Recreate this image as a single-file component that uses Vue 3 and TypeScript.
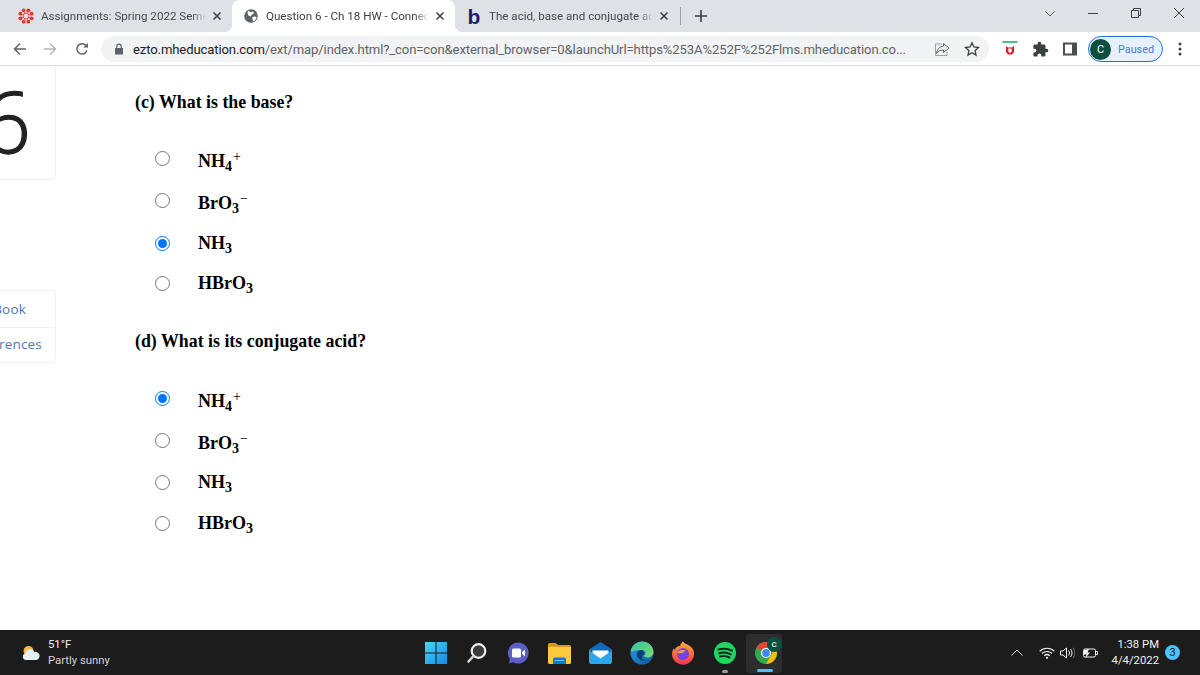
<script setup lang="ts">
interface Choice { base: string; sub: string; sup?: string; cls: string; checked?: boolean }
interface Question { title: string; name: string; cls: string; choices: Choice[] }

const questions: Question[] = [
  {
    title: '(c) What is the base?', name: 'c', cls: 'q-c',
    choices: [
      { base: 'NH', sub: '4', sup: '+', cls: 'h41' },
      { base: 'BrO', sub: '3', sup: '−', cls: 'h42' },
      { base: 'NH', sub: '3', cls: 'h44', checked: true },
      { base: 'HBrO', sub: '3', cls: 'h36' },
    ],
  },
  {
    title: '(d) What is its conjugate acid?', name: 'd', cls: 'q-d',
    choices: [
      { base: 'NH', sub: '4', sup: '+', cls: 'h42', checked: true },
      { base: 'BrO', sub: '3', sup: '−', cls: 'h42' },
      { base: 'NH', sub: '3', cls: 'h42' },
      { base: 'HBrO', sub: '3', cls: 'h40' },
    ],
  },
]

const canvasDots = Array.from({ length: 8 }, (_, i) => {
  const a = (i * Math.PI) / 4 + Math.PI / 8
  return { cx: 8 + Math.cos(a) * 6.1, cy: 8 + Math.sin(a) * 6.1 }
})
const canvasInner = Array.from({ length: 8 }, (_, i) => {
  const a = (i * Math.PI) / 4 + Math.PI / 8
  return { cx: 8 + Math.cos(a) * 3.1, cy: 8 + Math.sin(a) * 3.1 }
})
</script>

<template>
  <div class="app">
    <header class="tabstrip">
      <div class="tab tab-first">
        <svg class="fav" viewBox="0 0 16 16" width="16" height="16">
          <circle v-for="(d, i) in canvasDots" :key="i" :cx="d.cx" :cy="d.cy" r="1.9" fill="#e5352b" />
          <circle v-for="(d, i) in canvasInner" :key="'n' + i" :cx="d.cx" :cy="d.cy" r="0.9" fill="#e5352b" />
        </svg>
        <span class="tab-title">Assignments: Spring 2022 Semes</span>
        <svg class="tab-x" viewBox="0 0 10 10" width="10" height="10"><path d="M1.500 1.500l7 7M8.500 1.500l-7 7" stroke="#3c4043" stroke-width="1.500" fill="none" /></svg>
      </div>
      <div class="tab tab-active">
        <svg class="fav" viewBox="0 0 16 16" width="16" height="16">
          <circle cx="8" cy="8" r="6.800" fill="#5f6368" />
          <path d="M5 2.600l2.400 1.600 2.600-.6 1 1.600-2 1.200-1.400 2-2.200-1-.9-2.300zM9.500 9l2.800-.6 1.500 1.300-1.900 2.800-1.500 1-1-2.400z" fill="#fff" />
        </svg>
        <span class="tab-title">Question 6 - Ch 18 HW - Connec</span>
        <svg class="tab-x" viewBox="0 0 10 10" width="10" height="10"><path d="M1.500 1.500l7 7M8.500 1.500l-7 7" stroke="#3c4043" stroke-width="1.500" fill="none" /></svg>
      </div>
      <div class="tab tab-third">
        <span class="fav-b">b</span>
        <span class="tab-title">The acid, base and conjugate aci</span>
        <svg class="tab-x" viewBox="0 0 10 10" width="10" height="10"><path d="M1.500 1.500l7 7M8.500 1.500l-7 7" stroke="#3c4043" stroke-width="1.500" fill="none" /></svg>
      </div>
      <span class="tab-sep"></span>
      <svg class="new-tab" viewBox="0 0 12 12" width="12" height="12"><path d="M6 0v12M0 6h12" stroke="#3c4043" stroke-width="1.600" /></svg>
      <span class="strip-space"></span>
      <svg class="win-chevron" viewBox="0 0 10 6" width="10" height="6"><path d="M.5.5l4.500 4.500L9.500.5" stroke="#5f6368" fill="none" /></svg>
      <div class="win-btn"><svg viewBox="0 0 10 10" width="10" height="10"><path d="M0 5.500h10" stroke="#3c4043" /></svg></div>
      <div class="win-btn"><svg viewBox="0 0 10 10" width="10" height="10"><path d="M.5 2.500h7v7h-7zM2.500 2.500v-2h7v7h-2" stroke="#3c4043" fill="none" /></svg></div>
      <div class="win-btn"><svg viewBox="0 0 10 10" width="10" height="10"><path d="M0 0l10 10M10 0L0 10" stroke="#3c4043" fill="none" /></svg></div>
    </header>

    <nav class="toolbar">
      <svg class="nav-ic" viewBox="0 0 14 14" width="14" height="14"><path d="M13 7H1.500M7 1.500L1.500 7 7 12.500" stroke="#5f6368" stroke-width="1.500" fill="none" /></svg>
      <svg class="nav-ic" viewBox="0 0 14 14" width="14" height="14"><path d="M1 7h11.500M7 1.500L12.500 7 7 12.500" stroke="#b4b7bb" stroke-width="1.500" fill="none" /></svg>
      <svg class="nav-ic" viewBox="0 0 14 14" width="14" height="14"><path d="M12 8.600A5.200 5.200 0 1 1 11 3.400L12.600 5" stroke="#5f6368" stroke-width="1.500" fill="none" /><path d="M13 1v4.600H8.400z" fill="#5f6368" /></svg>
      <div class="omnibox">
        <svg class="lock" viewBox="0 0 10 12" width="10" height="12"><path d="M1 5h8v6.500H1z" fill="#5f6368" /><path d="M2.800 5V3.400a2.200 2.200 0 0 1 4.400 0V5" fill="none" stroke="#5f6368" stroke-width="1.200" /></svg>
        <span class="url"><b>ezto.mheducation.com</b>/ext/map/index.html?_con=con&amp;external_browser=0&amp;launchUrl=https%253A%252F%252Flms.mheducation.co...</span>
        <svg class="omni-ic" viewBox="0 0 16 16" width="16" height="16"><path d="M9.500 2.500L15 7l-5.500 4.500V9C6 9 4 10 2.500 12.500 3 8.500 5.500 5.500 9.500 5z" fill="none" stroke="#5f6368" /><path d="M8 3H1.500v11.500H13V11" fill="none" stroke="#9aa0a6" /></svg>
        <svg class="omni-ic star" viewBox="0 0 16 16" width="16" height="16"><path d="M8 1.800l1.900 4.200 4.600.5-3.400 3.100.9 4.500L8 11.800 4 14.100l.9-4.500L1.500 6.500 6.100 6z" fill="none" stroke="#3c4043" stroke-width="1.300" /></svg>
      </div>
      <svg class="ext mcafee" viewBox="0 0 16 16" width="16" height="16"><path d="M.5 1h15" stroke="#1e9e7d" stroke-width="1.500" /><path d="M4 5l2 1.500h4L12 5v6l-2 2.500H6L4 11z" fill="#d32027" /><path d="M6.300 7.500h3.400v3.200L8 12l-1.700-1.300z" fill="#fff" /></svg>
      <svg class="ext puzzle" viewBox="0 0 24 24" width="17" height="17"><path d="M20.500 11H19V7c0-1.100-.9-2-2-2h-4V3.500C13 2.120 11.880 1 10.500 1S8 2.120 8 3.500V5H4c-1.100 0-1.990.9-1.990 2v3.800H3.500c1.490 0 2.700 1.210 2.700 2.700s-1.210 2.700-2.700 2.700H2V20c0 1.100.9 2 2 2h3.800v-1.500c0-1.490 1.210-2.700 2.700-2.700 1.490 0 2.700 1.210 2.700 2.700V22H17c1.100 0 2-.9 2-2v-4h1.500c1.380 0 2.500-1.120 2.500-2.500S21.880 11 20.500 11z" fill="#3c4043" /></svg>
      <svg class="ext panel" viewBox="0 0 14 14" width="14" height="14"><rect x="1" y="1.500" width="12" height="11" fill="none" stroke="#4a4d51" stroke-width="2" /><rect x="9" y="2" width="4" height="10" fill="#4a4d51" /></svg>
      <div class="profile"><span class="avatar">C</span><span class="paused">Paused</span></div>
      <svg class="kebab" viewBox="0 0 4 14" width="4" height="14"><circle cx="2" cy="2" r="1.500" fill="#3c4043" /><circle cx="2" cy="7" r="1.500" fill="#3c4043" /><circle cx="2" cy="12" r="1.500" fill="#3c4043" /></svg>
    </nav>

    <div class="page">
      <aside class="sidebar">
        <div class="num-card"><span class="big-six">6</span></div>
        <div class="link-card">
          <div class="link-row book">eBook</div>
          <div class="link-row refs">References</div>
        </div>
      </aside>
      <main class="main">
        <section v-for="q in questions" :key="q.name" class="question" :class="q.cls">
          <h2 class="q-title">{{ q.title }}</h2>
          <ul class="choices">
            <li v-for="(c, i) in q.choices" :key="i" class="choice" :class="c.cls">
              <input class="radio" type="radio" :name="q.name" :checked="c.checked" />
              <span class="formula" :class="{ ion: c.sup }">{{ c.base }}<sub>{{ c.sub }}</sub><sup v-if="c.sup">{{ c.sup }}</sup></span>
            </li>
          </ul>
        </section>
      </main>
    </div>

    <footer class="taskbar">
      <div class="weather">
        <svg viewBox="0 0 20 16" width="20" height="16">
          <circle cx="7.500" cy="6" r="5" fill="#f5b83d" />
          <path d="M5 15a3.300 3.300 0 0 1-.6-6.500A4.800 4.800 0 0 1 13.500 7 3.900 3.900 0 0 1 15.500 15z" fill="#e4eff7" />
        </svg>
        <div class="weather-text"><span>51°F</span><span>Partly sunny</span></div>
      </div>
      <div class="apps">
        <div class="app-btn">
          <svg viewBox="0 0 22 22" width="22" height="22">
            <defs><linearGradient id="w" x1="0" y1="0" x2="1" y2="1"><stop offset="0" stop-color="#4fd0f5" /><stop offset="1" stop-color="#0d8fe8" /></linearGradient></defs>
            <path d="M0 0h10.500v10.500H0zM11.500 0H22v10.500H11.500zM0 11.500h10.500V22H0zM11.500 11.500H22V22H11.500z" fill="url(#w)" />
          </svg>
        </div>
        <div class="app-btn">
          <svg viewBox="0 0 22 22" width="22" height="22"><circle cx="12.500" cy="9" r="6.800" fill="#3a3a3a" stroke="#ececec" stroke-width="2.200" /><path d="M7.500 14L2.500 19.500" stroke="#d4d4d4" stroke-width="2.600" stroke-linecap="round" /></svg>
        </div>
        <div class="app-btn">
          <svg viewBox="0 0 22 22" width="22" height="22"><path d="M11 .5a10.500 10.500 0 1 1-5 19.700L2 21.500l.8-4.500A10.500 10.500 0 0 1 11 .5z" fill="#5b5fc7" /><rect x="5" y="6.500" width="9" height="9" rx="1.500" fill="#fff" /><path d="M15 10l3-2.200v6.400l-3-2.200z" fill="#fff" /></svg>
        </div>
        <div class="app-btn">
          <svg viewBox="0 0 23 21" width="23" height="21"><path d="M0 1.500A1.500 1.500 0 0 1 1.500 0h6L10 2h11.500A1.500 1.500 0 0 1 23 3.500V5H0z" fill="#d99a1c" /><path d="M0 4h23v15.500a1.500 1.500 0 0 1-1.500 1.500h-20A1.500 1.500 0 0 1 0 19.500z" fill="#fdc93d" /><path d="M5 16a1.500 1.500 0 0 1 1.500-1.500h10A1.500 1.500 0 0 1 18 16v5H5z" fill="#0f78d4" /><path d="M7 17.500h9" stroke="#7fc4f5" /></svg>
        </div>
        <div class="app-btn">
          <svg viewBox="0 0 23 22" width="23" height="22"><path d="M0 7.500L11.500 0 23 7.500V12H0z" fill="#0f6cbd" /><path d="M3.500 8.500h16v3.500l-8 5.500-8-5.500z" fill="#fff" /><path d="M0 8.500l11.500 8L23 8.500V20a2 2 0 0 1-2 2H2a2 2 0 0 1-2-2z" fill="#2ba5ec" /></svg>
        </div>
        <div class="app-btn">
          <svg viewBox="0 0 24 24" width="24" height="24">
            <defs><linearGradient id="e1" x1="0" y1="0" x2="1" y2="1"><stop offset="0" stop-color="#35c1a0" /><stop offset="1" stop-color="#7fdc6d" /></linearGradient><linearGradient id="e2" x1="0" y1="0" x2="1" y2="1"><stop offset="0" stop-color="#2a9ee0" /><stop offset="1" stop-color="#0b5aa5" /></linearGradient></defs>
            <circle cx="12" cy="12" r="11.500" fill="url(#e2)" />
            <path d="M.8 10.500C2 4 7 .5 12 .5c6.500 0 11.500 5 11.500 10.500 0 3.500-3 5.500-6 5.500-2 0-3.500-.8-3.500-2 2.300-1 2.500-5-2-5.500C6 8.500 3 10 .8 10.500z" fill="url(#e1)" />
            <path d="M11 9C7 9.500 6 13 7.500 16c1.500 3 6 5 10 3.500-3 .5-5.500-1-5.500-3.500 0-1.500 .3-2.500 2-2 .5-2.500-.5-5-3-5z" fill="#0a3f78" />
          </svg>
        </div>
        <div class="app-btn">
          <svg viewBox="0 0 24 24" width="24" height="24">
            <defs><linearGradient id="f" x1="0" y1="0" x2="0" y2="1"><stop offset="0" stop-color="#ffb02e" /><stop offset="1" stop-color="#f5304f" /></linearGradient></defs>
            <path d="M12 .5c2 3 4.500 2.500 6 4 3 2 5 4 5 8A11 11 0 0 1 1 13c0-2.500 1-4.500 2-6 0 1 .5 1.500 1 2 .5-3 3-4 5-4 .5-2 2-3.500 3-4.500z" fill="url(#f)" />
            <circle cx="12" cy="13" r="6" fill="#7542e5" />
            <path d="M6 11.500c2-2.500 6-3.500 9-1.500-2 0-3 1-3 2-3 0-4.500.5-6-.5z" fill="#ff9a3c" />
          </svg>
        </div>
        <div class="app-btn has-dot">
          <svg viewBox="0 0 22 22" width="22" height="22"><circle cx="11" cy="11" r="11" fill="#1ed760" /><path d="M4.500 7.500c4.500-1.300 9.500-1 13.500 1.200M5.300 11.200c4-1 8-.8 11.400 1.100M6 14.500c3.300-.8 6.500-.6 9.500 1" stroke="#16261b" stroke-width="2" fill="none" stroke-linecap="round" /></svg>
          <i class="run-dot"></i>
        </div>
        <div class="app-btn chrome-tile">
          <svg viewBox="0 0 22 22" width="22" height="22">
            <circle cx="11" cy="11" r="11" fill="#34a853" />
            <path d="M11 0a11 11 0 0 1 9.500 5.500H11a5.500 5.500 0 0 0-5 3.200L1.500 5.500A11 11 0 0 1 11 0z" fill="#ea4335" />
            <path d="M20.500 5.500A11 11 0 0 1 11 22l4.700-8.200a5.500 5.500 0 0 0-.2-8.300z" fill="#fbbc05" />
            <circle cx="11" cy="11" r="5" fill="#fff" /><circle cx="11" cy="11" r="3.900" fill="#4285f4" />
          </svg>
          <span class="chrome-badge">C</span>
          <i class="run-bar"></i>
        </div>
      </div>
      <div class="tray">
        <svg class="caret" viewBox="0 0 12 7" width="12" height="7"><path d="M.5 6.500L6 1l5.500 5.500" stroke="#d8d8d8" fill="none" /></svg>
        <svg class="wifi" viewBox="0 0 16 12" width="16" height="12"><path d="M.7 4.200a10.500 10.500 0 0 1 14.600 0M3 6.500a7.200 7.200 0 0 1 10 0M5.300 8.800a3.900 3.900 0 0 1 5.400 0" stroke="#f2f2f2" stroke-width="1.200" fill="none" /><circle cx="8" cy="10.800" r="1.100" fill="#f2f2f2" /></svg>
        <svg class="speaker" viewBox="0 0 15 12" width="15" height="12"><path d="M.5 4h2.500L6.500 1v10L3 8H.5z" stroke="#f2f2f2" fill="none" /><path d="M8.500 3.500a3.500 3.500 0 0 1 0 5M10.500 2a6 6 0 0 1 0 8" stroke="#f2f2f2" fill="none" /><path d="M13 .8a8.500 8.500 0 0 1 0 10.400" stroke="#777" fill="none" /></svg>
        <svg class="battery" viewBox="0 0 16 12" width="16" height="12"><rect x="1.500" y="2" width="12" height="8" rx="1.500" stroke="#f2f2f2" fill="none" /><path d="M14 4.500h1.500v3H14" stroke="#f2f2f2" fill="none" /><path d="M2 3l5-1-1.500 3.500H8L3.500 11l1-3.500H1.500z" fill="#f2f2f2" /></svg>
        <div class="clock"><span>1:38 PM</span><span>4/4/2022</span></div>
        <span class="notif">3</span>
      </div>
    </footer>
  </div>
</template>

<style>
html, body { margin: 0; background: #fff; }
</style>

<style scoped>
.app {
  width: 1200px;
  height: 675px;
  display: flex;
  flex-direction: column;
  overflow: hidden;
  font-family: Roboto, "Open Sans", sans-serif;
  background: #fff;
}

/* tab strip */
.tabstrip {
  height: 32px;
  flex: none;
  background: #dee1e6;
  display: flex;
  align-items: center;
}
.tab {
  height: 32px;
  box-sizing: border-box;
  display: flex;
  align-items: center;
  position: relative;
  font-size: 11.6px;
  color: #45484d;
}
.tab-first { width: 232px; padding: 0 10px 0 18px; }
.tab-active {
  width: 223px;
  padding: 0 10px 0 11px;
  background: #fff;
  border-radius: 8px 8px 0 0;
  color: #3c4043;
}
.tab-active::before,
.tab-active::after {
  content: "";
  position: absolute;
  bottom: 0;
  width: 8px;
  height: 8px;
}
.tab-active::before { left: -8px; background: radial-gradient(circle at 0 0, #dee1e6 8px, #fff 8.5px); }
.tab-active::after { right: -8px; background: radial-gradient(circle at 100% 0, #dee1e6 8px, #fff 8.5px); }
.tab-third { width: 226px; padding: 0 12px 0 11px; }
.fav { flex: none; margin-right: 7px; }
.fav-b {
  flex: none;
  width: 16px;
  margin-right: 7px;
  font: 700 21px/21px "Liberation Sans", sans-serif;
  color: #1c1a73;
  text-align: center;
}
.tab-title {
  flex: 1;
  min-width: 0;
  white-space: nowrap;
  -webkit-mask-image: linear-gradient(90deg, #000 calc(100% - 14px), transparent 100%);
  mask-image: linear-gradient(90deg, #000 calc(100% - 14px), transparent 100%);
}
.tab-x { flex: none; margin-left: 6px; }
.tab-sep { width: 1px; height: 18px; background: #9ea2a7; margin-left: -1px; }
.new-tab { flex: none; margin-left: 14px; }
.strip-space { flex: 1; }
.win-chevron { flex: none; margin-right: 16px; margin-bottom: 5px; }
.win-btn {
  width: 43px;
  height: 32px;
  display: flex;
  align-items: center;
  justify-content: center;
  padding-bottom: 6px;
  box-sizing: border-box;
}

/* toolbar */
.toolbar {
  height: 34px;
  flex: none;
  box-sizing: border-box;
  background: #fff;
  border-bottom: 1px solid #dadce0;
  display: flex;
  align-items: center;
  padding: 1px 0 0 13px;
}
.nav-ic { flex: none; margin-right: 16px; }
.nav-ic:nth-child(3) { margin-right: 0; margin-left: 2px; }
.omnibox {
  flex: none;
  width: 888px;
  height: 26px;
  margin-left: 12px;
  border-radius: 13px;
  background: #f1f3f4;
  display: flex;
  align-items: center;
  padding-left: 13px;
  box-sizing: border-box;
}
.lock { flex: none; margin-right: 9px; }
.url {
  width: 772px;
  flex: none;
  white-space: nowrap;
  font: 13.1px Roboto, sans-serif;
  letter-spacing: -0.12px;
  color: #5f6368;
}
.url b { font-weight: 400; color: #202124; }
.omni-ic { flex: none; margin-left: 29px; }
.omni-ic.star { margin-left: 14px; }
.ext { flex: none; }
.mcafee { margin-left: 13px; }
.puzzle { margin-left: 14px; }
.panel { margin-left: 14px; }
.profile {
  flex: none;
  margin-left: 11px;
  width: 75px;
  height: 26px;
  box-sizing: border-box;
  border: 1px solid #1a73e8;
  border-radius: 13px;
  background: #e8f0fe;
  display: flex;
  align-items: center;
}
.avatar {
  width: 21px;
  height: 21px;
  margin-left: 1px;
  border-radius: 50%;
  background: #0b4f40;
  color: #fff;
  font-size: 11px;
  line-height: 21px;
  text-align: center;
}
.paused { margin-left: 7px; font-size: 10.8px; color: #3b7fe0; }
.kebab { flex: none; margin-left: 15px; }

/* page */
.page { flex: 1; min-height: 0; display: flex; }
.sidebar { width: 56px; flex: none; }
.num-card {
  height: 114px;
  box-sizing: border-box;
  border-right: 1px solid #f1f1f1;
  border-bottom: 1px solid #f1f1f1;
  border-bottom-right-radius: 6px;
  overflow: hidden;
}
.big-six {
  display: block;
  margin: 13px 0 0 -17px;
  font: 300 84px/84px "Open Sans", sans-serif;
  -webkit-text-stroke: 1.3px #222;
  color: #222;
}
.link-card {
  margin-top: 110px;
  border: 1px solid #f1f1f1;
  border-left: none;
  border-bottom-right-radius: 6px;
  border-top-right-radius: 4px;
  overflow: hidden;
}
.link-row {
  height: 36px;
  display: flex;
  align-items: center;
  justify-content: flex-end;
  white-space: nowrap;
  font: 13.5px "Open Sans", sans-serif;
  letter-spacing: .2px;
  color: #4f76b5;
}
.link-row.book { padding-right: 29px; border-bottom: 1px solid #f1f1f1; }
.link-row.refs { height: 34px; box-sizing: border-box; padding: 0 13px 2px 0; }
.main {
  padding-left: 79px;
  color: #000;
  font-family: "Liberation Serif", "Times New Roman", serif;
}
.q-c { padding-top: 25px; }
.q-d { padding-top: 29px; }
.q-title { margin: 0; font-size: 17.85px; line-height: 22px; font-weight: 700; }
.choices { list-style: none; margin: 25px 0 0; padding: 0 0 0 20px; }
.choice { display: flex; align-items: center; height: 40px; }
.h36 { height: 36px; }
.h41 { height: 41px; }
.h42 { height: 42px; }
.h44 { height: 44px; }
.radio { width: 15px; height: 15px; margin: 0 28px 0 0; flex: none; accent-color: #0075ff; }
.formula { font-size: 18px; font-weight: 700; line-height: 22px; white-space: nowrap; }
.formula.ion { margin-top: 5px; }
.formula sub { font-size: 14px; line-height: 0; vertical-align: -4px; }
.formula sup { font-size: 14px; line-height: 0; vertical-align: 6px; font-weight: 400; margin-left: 1px; }

/* taskbar */
.taskbar {
  height: 45px;
  flex: none;
  background: #1c1c1c;
  display: flex;
  align-items: center;
  color: #f2f2f2;
  font-size: 11.3px;
  position: relative;
}
.weather { width: 415px; flex: none; display: flex; align-items: center; padding-left: 21px; box-sizing: border-box; }
.weather-text { display: flex; flex-direction: column; margin-left: 7px; line-height: 16px; padding-top: 1px; }
.weather-text span:last-child { color: #d4d4d4; }
.apps { display: flex; align-items: center; flex: none; }
.app-btn {
  width: 41.300px;
  height: 45px;
  display: flex;
  align-items: center;
  justify-content: center;
  position: relative;
  padding-top: 1px;
  box-sizing: border-box;
}
.run-dot {
  position: absolute;
  left: 18px;
  bottom: 2px;
  width: 6px;
  height: 3px;
  border-radius: 2px;
  background: #9a9a9a;
}
.chrome-tile::before {
  content: "";
  position: absolute;
  inset: 4px 5px 2px 1px;
  background: #2d2d2d;
  border-radius: 4px;
}
.chrome-tile svg { position: relative; }
.chrome-badge {
  position: absolute;
  top: 7px;
  right: 5px;
  width: 15px;
  height: 15px;
  border-radius: 50%;
  background: #0b4f40;
  color: #ddd;
  font-size: 8px;
  font-weight: 700;
  line-height: 15px;
  text-align: center;
}
.run-bar {
  position: absolute;
  left: 12px;
  bottom: 3px;
  width: 16px;
  height: 3px;
  border-radius: 2px;
  background: #4cc2ff;
}
.tray {
  flex: 1;
  display: flex;
  align-items: center;
  justify-content: flex-end;
  padding-right: 20px;
}
.caret { flex: none; margin-right: 16px; }
.wifi { flex: none; margin-right: 5px; }
.speaker { flex: none; margin-right: 7px; }
.battery { flex: none; margin-right: 14px; }
.clock { display: flex; flex-direction: column; align-items: flex-end; line-height: 16px; margin-right: 6px; }
.notif {
  width: 15px;
  height: 15px;
  border-radius: 50%;
  background: #4cc2ff;
  color: #111;
  font-size: 11px;
  line-height: 15px;
  text-align: center;
  margin-bottom: 1px;
}
</style>
